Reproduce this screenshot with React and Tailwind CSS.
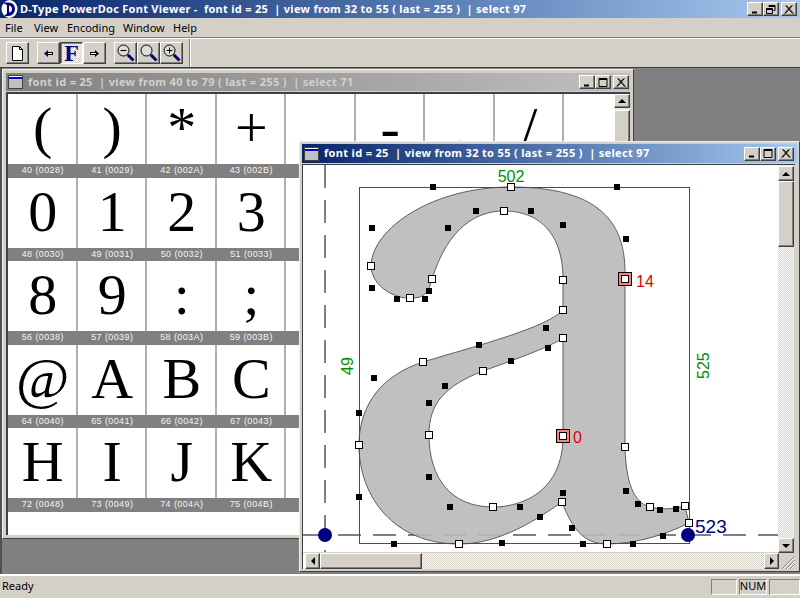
const ui = { fontFamily: '"Noto Sans", Tahoma, sans-serif' };

const raised = "border border-t-white border-l-white border-r-[#404040] border-b-[#404040] shadow-[inset_-1px_-1px_0_#808080]";

function WinBtn({ kind }) {
  const c = "#000";
  return (
    <div className={`w-4 h-[14px] bg-[#d4d0c8] ${raised} flex items-center justify-center`}>
      <svg width="10" height="9" viewBox="0 0 10 9" fill="none" stroke={c}>
        {kind === "min" && <path d="M2 7.5h5" strokeWidth="2" />}
        {kind === "max" && <path d="M1 1.5h8M1 .5h8v8h-8z" />}
        {kind === "restore" && <path d="M3 2V.5h6v5H7.5M3 1.5h6M.5 3.5h6v5h-6zM.5 4.5h6" />}
        {kind === "close" && <path d="M1.5 .5l7 8M2.5 .5l7 8M8.5 .5l-7 8M7.5 .5l-7 8" strokeWidth="0.9" />}
      </svg>
    </div>
  );
}

function WinIcon() {
  return (
    <svg width="15" height="14" viewBox="0 0 15 14" className="shrink-0">
      <rect x=".5" y=".5" width="14" height="13" fill="#c8c8c8" stroke="#404040" />
      <rect x="1" y="1" width="13" height="3" fill="#fff" />
      <rect x="1" y="2" width="13" height="2" fill="#0000d0" />
      <rect x="1" y="5" width="13" height="8" fill="#c0c0c0" />
    </svg>
  );
}

function Logo() {
  return (
    <svg width="18" height="18" viewBox="0 0 18 18" className="shrink-0">
      <rect width="18" height="18" fill="#0a246a" />
      <ellipse cx="9.500" cy="9" rx="8" ry="9" fill="#fff" />
      <path d="M2 2.500h6.500c4.500 0 6.500 3 6.500 6.500s-2.500 7-7 7H4l3-2.500V5z" fill="#000080" />
      <path d="M9 5.500c2 .2 3 1.700 3 3.500s-1 3.300-3 3.500z" fill="#fff" />
    </svg>
  );
}

function ToolBtn({ children, pressed }) {
  return (
    <div
      className={
        pressed
          ? `w-[23px] h-[22px] flex items-center justify-center border border-t-[#404040] border-l-[#404040] border-r-white border-b-white shadow-[inset_1px_1px_0_#808080] ${dither}`
          : `w-[23px] h-[22px] flex items-center justify-center bg-[#d4d0c8] ${raised}`
      }
    >
      {children}
    </div>
  );
}

function Arrow({ dir }) {
  return (
    <svg width="9" height="7" viewBox="0 0 9 7">
      {dir === "l" ? (
        <>
          <path d="M4 0v7L0 3.500z" fill="#000080" />
          <path d="M3.500 2H9v3H3.500z" fill="#000" />
          <path d="M4 3h4v1H4z" fill="#fff" />
        </>
      ) : (
        <>
          <path d="M5 0v7l4-3.500z" fill="#000" />
          <path d="M0 2h5.500v3H0z" fill="#000" />
          <path d="M1 3h5v1H1z" fill="#fff" />
        </>
      )}
    </svg>
  );
}

function Mag({ sign }) {
  return (
    <svg width="18" height="18" viewBox="0 0 18 18" fill="none">
      <circle cx="6.500" cy="6.500" r="5.500" fill="#dcdcdc" stroke="#000" />
      <path d="M11 11l5.500 5.500" stroke="#000080" strokeWidth="3" />
      <path d="M10.500 10.500l2 2" stroke="#000" strokeWidth="1.200" />
      {sign && <path d="M3.500 6.500h6" stroke="#000" />}
      {sign === "+" && <path d="M6.500 3.500v6" stroke="#000" />}
    </svg>
  );
}

const chars = [];
for (let i = 40; i < 80; i++) chars.push(i);

function Cell({ code }) {
  const hex = code.toString(16).toUpperCase().padStart(4, "0");
  return (
    <div className="h-[83.5px] flex flex-col">
      <div
        className="h-[70px] pl-[2px] border-r-2 border-[#b0b0b0] text-center text-black text-[58px] leading-[68px] overflow-hidden"
        style={{ fontFamily: '"Liberation Serif", serif' }}
      >
        {String.fromCharCode(code)}
      </div>
      <div
        className="h-[13.5px] bg-[#808080] text-[#f4f4f4] text-center text-[9px] leading-[13px] tracking-[0.4px] whitespace-nowrap"
        style={{ fontFamily: '"Liberation Sans", sans-serif' }}
      >
        {code} ({hex})
      </div>
    </div>
  );
}

function ScrollArrow({ d }) {
  return (
    <svg width="8" height="8" viewBox="0 0 8 8">
      <path d={d} fill="#000" />
    </svg>
  );
}

const onCurve = [
  [511,187],[504,211],[563,280],[563,310],[563,338],[432,279],[410,298],[371,266],
  [423,362],[483,371],[429,435],[625,447],[359,445],[493,507],[562,502],[650,507],
  [685,506],[689,523],[607,544],[459,544],
];
const offCurve = [
  [433,187],[617,187],[476,211],[531,211],[563,225],[626,239],[372,228],[448,228],
  [372,288],[429,291],[397,299],[425,299],[546,328],[479,345],[548,348],[511,361],
  [374,378],[445,386],[429,403],[359,413],[429,477],[359,497],[450,507],[520,507],
  [563,493],[540,517],[626,491],[638,504],[660,510],[676,509],[572,528],[663,536],
  [394,544],[502,543],[583,544],[633,544],
];

const glyph =
  "M511 187C617 187 626 239 625 279L625 447C626 491 638 504 650 507C660 510 676 509 685 506L689 523C663 536 633 544 607 544C583 544 572 528 562 502C540 517 502 544 459 544C394 544 359 497 359 445C359 413 374 378 423 362C479 345 546 328 563 310L563 280C563 225 531 211 504 211C476 211 448 228 432 279C429 291 425 299 410 298C397 299 372 288 371 266C372 228 433 187 511 187Z" +
  "M563 338C548 348 511 361 483 371C445 386 429 403 429 435C429 477 450 507 493 507C520 507 563 493 563 436Z";

function GlyphCanvas() {
  const lbl = { fontFamily: '"Liberation Sans", sans-serif', fontSize: 16 };
  return (
    <svg width="475" height="387" viewBox="303 165 475 387" className="block bg-white">
      <g stroke="#808080" strokeWidth="2" strokeDasharray="23 12" fill="none">
        <path d="M303 535H778" />
        <path d="M325 165V552" />
      </g>
      <path d={glyph} fill="#b9b9b9" fillOpacity="0.9" fillRule="evenodd" stroke="#505050" strokeWidth="0.9" />
      <rect x="359.500" y="187.500" width="330" height="356" fill="none" stroke="#008000" />
      {offCurve.map(([x, y]) => (
        <rect key={`${x}-${y}`} x={x - 3} y={y - 3} width="6" height="6" fill="#000" />
      ))}
      <rect x="618.500" y="272.500" width="13" height="13" fill="#ff8080" stroke="#000" />
      <rect x="556.500" y="429.500" width="13" height="13" fill="#ff8080" stroke="#000" />
      {[...onCurve, [625, 279], [563, 436]].map(([x, y]) => (
        <rect key={`${x}_${y}`} x={x - 3.5} y={y - 3.5} width="7" height="7" fill="#fff" stroke="#000" />
      ))}
      <circle cx="325" cy="535" r="7" fill="#000080" />
      <circle cx="688" cy="535" r="7" fill="#000080" />
      <text x="511" y="182" textAnchor="middle" fill="#009000" style={lbl}>502</text>
      <text x="636" y="287" fill="#e00000" style={lbl}>14</text>
      <text x="573" y="443" fill="#e00000" style={lbl}>0</text>
      <text transform="translate(353 375) rotate(-90)" fill="#009000" style={lbl}>49</text>
      <text transform="translate(709 379) rotate(-90)" fill="#009000" style={lbl}>525</text>
      <text x="695" y="533" fill="#000080" style={{ ...lbl, fontSize: 19 }}>523</text>
    </svg>
  );
}

const dither = "bg-[repeating-conic-gradient(#ffffff_0_25%,#d4d0c8_0_50%)] bg-[length:2px_2px]";

export default function App() {
  return (
    <div className="w-[800px] h-[598px] flex flex-col bg-[#d4d0c8] overflow-hidden text-black text-[11px]" style={ui}>
      {/* App title bar */}
      <div className="h-[18px] flex items-center bg-gradient-to-r from-[#0a246a] to-[#a6caf0] shrink-0">
        <Logo />
        <div className="ml-[2px] text-white font-bold text-[11px] whitespace-pre tracking-[0.28px]">
          D-Type PowerDoc Font Viewer -  font id = 25  | view from 32 to 55 ( last = 255 )  | select 97
        </div>
        <div className="ml-auto mr-[3px] flex">
          <WinBtn kind="min" />
          <WinBtn kind="restore" />
          <div className="w-[2px]" />
          <WinBtn kind="close" />
        </div>
      </div>

      {/* Menu */}
      <div className="h-5 flex items-center shrink-0 pl-[5px] pt-[1px] border-b border-[#808080]">
        <span className="w-[29px]">File</span>
        <span className="w-[33px]">View</span>
        <span className="w-[56px]">Encoding</span>
        <span className="w-[50px]">Window</span>
        <span>Help</span>
      </div>

      {/* Toolbar */}
      <div className="h-[30px] flex items-center shrink-0 border-t border-white border-b border-b-[#404040] pl-[6px]">
        <ToolBtn>
          <svg width="13" height="15" viewBox="0 0 13 15">
            <path d="M1.500 .5h7l3 3v11h-10z" fill="#fff" stroke="#000" />
            <path d="M8.500 .5v3h3" fill="none" stroke="#000" />
          </svg>
        </ToolBtn>
        <div className="w-2" />
        <ToolBtn><Arrow dir="l" /></ToolBtn>
        <ToolBtn pressed>
          <span className="text-[#000080] font-bold text-[24px] leading-none" style={{ fontFamily: '"Liberation Serif", serif' }}>F</span>
        </ToolBtn>
        <ToolBtn><Arrow dir="r" /></ToolBtn>
        <div className="w-2" />
        <ToolBtn><Mag sign="-" /></ToolBtn>
        <ToolBtn><Mag /></ToolBtn>
        <ToolBtn><Mag sign="+" /></ToolBtn>
        <div className="ml-[6px] h-7 w-[2px] border-l border-[#808080] border-r border-r-white" />
      </div>

      {/* MDI area */}
      <div className="relative flex-1 bg-[#808080] border-l-2 border-l-[#505050] overflow-hidden">
        {/* Left window */}
        <div className="absolute left-0 top-[1px] w-[632px] h-[470px] bg-[#d4d0c8] border border-[#f0f0f0] border-r-[#404040] border-b-[#404040] p-[3px] flex flex-col">
          <div className="h-[18px] shrink-0 flex items-center bg-gradient-to-r from-[#808080] to-[#c0c0c0] pl-[2px]">
            <WinIcon />
            <div className="ml-[5px] font-bold text-[#d4d0c8] whitespace-pre tracking-[0.33px]">
              font id = 25  | view from 40 to 79 ( last = 255 )  | select 71
            </div>
            <div className="ml-auto mr-[1px] flex">
              <WinBtn kind="min" />
              <WinBtn kind="max" />
              <div className="w-[2px]" />
              <WinBtn kind="close" />
            </div>
          </div>
          <div className="flex-1 flex min-h-0 mt-[1px] bg-white border-t-2 border-l-2 border-[#404040]">
            <div className="flex-1 min-w-0">
              <div className="grid grid-cols-[repeat(8,69.5px)]">
                {chars.map((c) => <Cell key={c} code={c} />)}
              </div>
            </div>
            <div className={`w-4 flex flex-col ${dither}`}>
              <div className={`h-[14px] bg-[#d4d0c8] ${raised} flex items-center justify-center`}>
                <ScrollArrow d="M4 2L8 6H0z" />
              </div>
              <div className={`h-[60px] mt-[2px] bg-[#d4d0c8] ${raised}`} />
            </div>
          </div>
        </div>

        {/* Right window */}
        <div className="absolute left-[297px] top-[73px] w-[501px] h-[431px] bg-[#d4d0c8] border border-[#f0f0f0] border-r-[#404040] border-b-[#404040] p-[2px] flex flex-col">
          <div className="h-[19px] shrink-0 flex items-center bg-gradient-to-r from-[#0a246a] to-[#a6caf0] pl-[2px]">
            <WinIcon />
            <div className="ml-[5px] font-bold text-white whitespace-pre tracking-[0.33px]">
              font id = 25  | view from 32 to 55 ( last = 255 )  | select 97
            </div>
            <div className="ml-auto mr-[3px] flex">
              <WinBtn kind="min" />
              <WinBtn kind="max" />
              <div className="w-[2px]" />
              <WinBtn kind="close" />
            </div>
          </div>
          <div className="flex-1 min-h-0 mt-[1px] flex flex-col border-t border-l border-[#404040] mr-[2px]">
            <div className="flex flex-1 min-h-0">
              <GlyphCanvas />
              <div className={`w-4 flex flex-col ${dither}`}>
                <div className={`h-[15px] mt-[1px] bg-[#d4d0c8] ${raised} flex items-center justify-center`}>
                  <ScrollArrow d="M4 2L8 6H0z" />
                </div>
                <div className={`h-[66px] bg-[#d4d0c8] ${raised}`} />
                <div className="flex-1" />
                <div className={`h-[15px] bg-[#d4d0c8] ${raised} flex items-center justify-center`}>
                  <ScrollArrow d="M0 2h8L4 6z" />
                </div>
              </div>
            </div>
            <div className={`h-4 flex ${dither}`}>
              <div className="w-[2px] bg-white" />
              <div className={`w-[15px] bg-[#d4d0c8] ${raised} flex items-center justify-center`}>
                <ScrollArrow d="M2 4L6 0v8z" />
              </div>
              <div className={`w-[102px] bg-[#d4d0c8] ${raised}`} />
              <div className="flex-1" />
              <div className={`w-[15px] bg-[#d4d0c8] ${raised} flex items-center justify-center`}>
                <ScrollArrow d="M2 0l4 4-4 4z" />
              </div>
              <div className="w-4 bg-[#d4d0c8] flex items-end justify-end">
                <svg width="14" height="14" viewBox="0 0 14 14">
                  <path d="M14 1L1 14M14 5L5 14M14 9L9 14" stroke="#808080" fill="none" />
                  <path d="M14 2L2 14M14 6L6 14M14 10L10 14" stroke="#fff" fill="none" />
                </svg>
              </div>
            </div>
          </div>
        </div>
      </div>

      {/* Status bar */}
      <div className="h-6 shrink-0 flex items-center border-t-2 border-white shadow-[0_-1px_0_#404040] pl-[2px] pb-[1px] bg-[#d4d0c8]">
        <span>Ready</span>
        <div className="ml-auto flex gap-[2px]">
          <div className="w-[26px] h-[16px] border border-[#808080] border-r-white border-b-white" />
          <div className="w-[28px] h-[16px] border border-[#808080] border-r-white border-b-white flex items-center justify-center text-[11px]">NUM</div>
          <div className="w-[31px] h-[16px] border border-[#808080] border-r-white border-b-white" />
        </div>
      </div>
    </div>
  );
}
